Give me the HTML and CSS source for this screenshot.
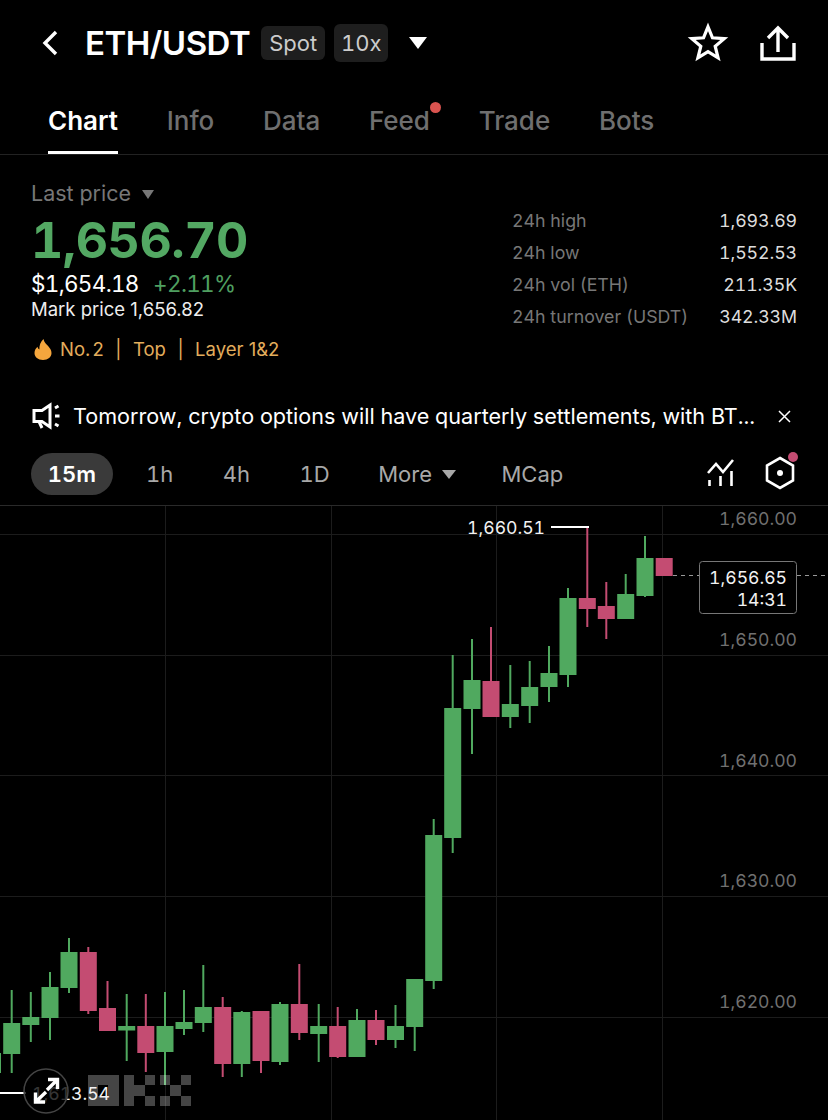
FILE: index.html
```html
<!DOCTYPE html>
<html lang="en">

<head>
    <meta charset="UTF-8">
    <meta name="viewport" content="width=device-width, initial-scale=1.0">
    <title>ETH/USDT</title>
    <link rel="stylesheet" href="styles.css">
</head>

<body>
    <div class="main">
        <div class="topbar">
            <svg class="back" width="16" height="26" viewBox="0 0 16 26">
                <path d="M14 2L3 13l11 11" />
            </svg>
            <span class="pair">ETH/USDT</span>
            <span class="chip">Spot</span>
            <span class="chip chip-lever">10x</span>
            <span class="caret caret-white"></span>
            <div class="topbar-icons">
                <svg class="line-icon" width="38" height="38" viewBox="0 0 40 40">
                    <polygon points="20,3 24.7,14.5 37.1,15.4 27.6,23.5 30.6,35.6 20,29 9.4,35.6 12.4,23.5 2.9,15.4 15.3,14.5" />
                </svg>
                <svg class="line-icon" width="36" height="36" viewBox="0 0 36 36">
                    <path d="M2 18v16h32V18M18 27V3M8 13L18 3l10 10" />
                </svg>
            </div>
        </div>

        <div class="tabs">
            <span class="tab active">Chart</span>
            <span class="tab">Info</span>
            <span class="tab">Data</span>
            <span class="tab tab-dot">Feed</span>
            <span class="tab">Trade</span>
            <span class="tab">Bots</span>
        </div>

        <div class="stats">
            <div class="price-col">
                <div class="last-label">Last price <span class="caret caret-grey"></span></div>
                <div class="last-price">1,656.70</div>
                <div class="sub-price">$1,654.18 <span class="change">+2.11%</span></div>
                <div class="mark-price">Mark price 1,656.82</div>
                <div class="tags">
                    <svg class="flame" width="18" height="21" viewBox="0 0 18 21">
                        <path d="M9.5 0c.6 3.5 2.6 4.7 4.6 7 1.900 2.200 3.400 4.300 3.400 7 0 3.900-3.500 7-8.500 7S.5 17.900.5 14c0-2.800 1.500-4.700 3-6.200.3 1.300.9 2.200 1.900 2.700C5.100 6.700 6.600 2.700 9.500 0z" />
                    </svg>
                    <span class="tag-no">No. 2</span>
                    <span class="tag-bar">|</span>
                    <span>Top</span>
                    <span class="tag-bar">|</span>
                    <span>Layer 1&amp;2</span>
                </div>
            </div>
            <div class="day-col">
                <div class="day-row"><span>24h high</span><b>1,693.69</b></div>
                <div class="day-row"><span>24h low</span><b>1,552.53</b></div>
                <div class="day-row"><span>24h vol (ETH)</span><b>211.35K</b></div>
                <div class="day-row"><span>24h turnover (USDT)</span><b>342.33M</b></div>
            </div>
        </div>

        <div class="notice">
            <svg class="line-icon horn" width="28" height="26" viewBox="0 0 28 26">
                <path d="M2 7.500h8L18 2v22l-8-5.500H2zM7 18.500L10 25M23 5l3.500-2M23 13h4.500M23 21l3.500 2" />
            </svg>
            <span class="notice-text">Tomorrow, crypto options will have quarterly settlements, with BT...</span>
            <svg class="line-icon close" width="13" height="13" viewBox="0 0 13 13">
                <path d="M1 1l11 11M12 1L1 12" />
            </svg>
        </div>

        <div class="frames">
            <span class="frame selected">15m</span>
            <span class="frame">1h</span>
            <span class="frame">4h</span>
            <span class="frame">1D</span>
            <span class="frame frame-more">More <span class="caret caret-light"></span></span>
            <span class="frame">MCap</span>
            <div class="frame-icons">
                <svg class="line-icon thin" width="30" height="30" viewBox="0 0 30 30">
                    <path d="M2 14l8-9 7 8L27 1M3.500 27v-6M14.500 27V17M25.500 27V12" />
                </svg>
                <svg class="line-icon thin" width="36" height="40" viewBox="0 0 36 40">
                    <path d="M16 4l13 7.500v15L16 34 3 26.500v-15z" />
                    <circle class="hex-dot" cx="16" cy="19" r="3" />
                    <circle class="red-dot" cx="29" cy="3" r="5" />
                </svg>
            </div>
        </div>

        <div class="chart">
            <svg class="chart-svg" width="828" height="614" viewBox="0 506 828 614">
                <path class="grid" d="M0 534.500H828M0 655.500H828M0 775.500H828M0 896.500H828M0 1017.500H828M165.500 506V1120M331.500 506V1120M496.500 506V1120M662.500 506V1120" />

                <g class="up"><path d="M-7.500 990V1090" /><rect x="-16" y="1053" width="17" height="20" /></g>
                <g class="up"><path d="M11.700 990V1073" /><rect x="3.200" y="1023" width="17" height="31" /></g>
                <g class="up"><path d="M30.800 992V1042" /><rect x="22.300" y="1017" width="17" height="8" /></g>
                <g class="up"><path d="M50 972V1040" /><rect x="41.500" y="987" width="17" height="31" /></g>
                <g class="up"><path d="M69 938V993" /><rect x="60.500" y="952" width="17" height="36" /></g>
                <g class="down"><path d="M88.300 947V1014" /><rect x="79.800" y="952" width="17" height="59" /></g>
                <g class="down"><path d="M107.500 981V1031" /><rect x="99" y="1008" width="17" height="23" /></g>
                <g class="up"><path d="M126.700 994V1061" /><rect x="118.200" y="1026" width="17" height="4.500" /></g>
                <g class="down"><path d="M145.800 994V1072" /><rect x="137.300" y="1026" width="17" height="27" /></g>
                <g class="up"><path d="M165 992V1085" /><rect x="156.500" y="1026" width="17" height="26" /></g>
                <g class="up"><path d="M184 990V1035" /><rect x="175.500" y="1022" width="17" height="7" /></g>
                <g class="up"><path d="M203.300 965V1032" /><rect x="194.800" y="1007" width="17" height="16" /></g>
                <g class="down"><path d="M222.700 997V1077" /><rect x="214.200" y="1007" width="17" height="57" /></g>
                <g class="up"><path d="M241.800 1011V1077" /><rect x="233.300" y="1012" width="17" height="52" /></g>
                <g class="down"><path d="M261 1011V1073" /><rect x="252.500" y="1011" width="17" height="50" /></g>
                <g class="up"><path d="M280 1002V1065" /><rect x="271.500" y="1004" width="17" height="58" /></g>
                <g class="down"><path d="M299.300 964V1040" /><rect x="290.800" y="1004" width="17" height="29" /></g>
                <g class="up"><path d="M318.700 1004V1062" /><rect x="310.200" y="1026" width="17" height="8" /></g>
                <g class="down"><path d="M337.700 1007V1058" /><rect x="329.200" y="1026" width="17" height="31" /></g>
                <g class="up"><path d="M357 1009V1057" /><rect x="348.500" y="1020" width="17" height="37" /></g>
                <g class="down"><path d="M376 1010V1045" /><rect x="367.500" y="1020" width="17" height="20" /></g>
                <g class="up"><path d="M395.500 1005V1048" /><rect x="387" y="1026" width="17" height="14" /></g>
                <g class="up"><path d="M414.700 979V1051" /><rect x="406.200" y="979" width="17" height="48" /></g>
                <g class="up"><path d="M433.700 819V989" /><rect x="425.200" y="835" width="17" height="146" /></g>
                <g class="up"><path d="M452.700 655V853" /><rect x="444.200" y="708" width="17" height="130" /></g>
                <g class="up"><path d="M472 639V754" /><rect x="463.500" y="680" width="17" height="29" /></g>
                <g class="down"><path d="M491 627V717" /><rect x="482.500" y="681" width="17" height="36" /></g>
                <g class="up"><path d="M510.300 665V728" /><rect x="501.800" y="704" width="17" height="13" /></g>
                <g class="up"><path d="M529.700 661V723" /><rect x="521.200" y="687" width="17" height="19" /></g>
                <g class="up"><path d="M549 646V702" /><rect x="540.500" y="673" width="17" height="14" /></g>
                <g class="up"><path d="M568 588V687" /><rect x="559.500" y="598" width="17" height="77" /></g>
                <g class="down"><path d="M587.300 527V627" /><rect x="578.800" y="598" width="17" height="11" /></g>
                <g class="down"><path d="M606.300 582V639" /><rect x="597.800" y="606" width="17" height="13" /></g>
                <g class="up"><path d="M625.700 574V619" /><rect x="617.200" y="594" width="17" height="25" /></g>
                <g class="up"><path d="M645 536V597" /><rect x="636.500" y="558" width="17" height="38" /></g>
                <g class="down"><rect x="655.700" y="558" width="17" height="18" /></g>

                <g class="axis">
                    <text x="797" y="525">1,660.00</text>
                    <text x="797" y="646">1,650.00</text>
                    <text x="797" y="767">1,640.00</text>
                    <text x="797" y="887">1,630.00</text>
                    <text x="797" y="1008">1,620.00</text>
                </g>

                <path class="marker-line" d="M551 527H589" />
                <text class="marker" x="545" y="534">1,660.51</text>

                <path class="dash" d="M673 575.500H699M797 575.500H828" />
                <rect class="price-box" x="699.500" y="561.500" width="97" height="52" rx="3" />
                <text class="box-text" x="787" y="584">1,656.65</text>
                <text class="box-text" x="787" y="606">14:31</text>

                <path class="logo" d="M88 1075h31v31H88zM98 1085v11h10v-11zM124 1075h10v31h-10zM134 1085h11v11h-11zM145 1075h10v10h-10zM145 1096h10v10h-10zM160 1075h10v10h-10zM181 1075h10v10h-10zM170 1085h11v11h-11zM160 1096h10v10h-10zM181 1096h10v10h-10z" />

                <path class="marker-line" d="M0 1093H26" />
                <text class="marker" x="110" y="1100">1,613.54</text>
                <circle class="expand-bg" cx="46" cy="1091" r="22" />
                <path class="expand" d="M57.500 1079.500L47 1090M48 1079.500h9.500v9.500M35.500 1102L46 1092M35.500 1092.500v9.500H45" />
            </svg>
        </div>
    </div>
</body>

</html>
```

FILE: styles.css
```css
* {
    box-sizing: border-box;
}

body {
    margin: 0;
    background-color: #000;
    color: #fff;
    font-family: "Inter", "Liberation Sans", sans-serif;
    font-variant-numeric: tabular-nums;
    overflow: hidden;
}

.main {
    width: 828px;
    height: 1120px;
    overflow: hidden;
}

.line-icon {
    fill: none;
    stroke: #fff;
    stroke-width: 3.4;
    display: block;
    overflow: visible;
}

.line-icon.thin {
    stroke-width: 2.6;
}

.line-icon.horn {
    stroke-width: 3;
}

.caret {
    display: inline-block;
    width: 0;
    height: 0;
    border-left: 9px solid transparent;
    border-right: 9px solid transparent;
    border-top: 12px solid #fff;
}

.caret-grey {
    border-left-width: 6.5px;
    border-right-width: 6.5px;
    border-top: 9px solid #777;
    margin-left: 5px;
    vertical-align: 2px;
}

.caret-light {
    border-left-width: 7px;
    border-right-width: 7px;
    border-top: 9px solid #a8a8a8;
    margin-left: 4px;
    vertical-align: 3px;
}

.topbar {
    height: 86px;
    display: flex;
    align-items: center;
    padding: 0 32px 0 42px;
}

.back {
    fill: none;
    stroke: #fff;
    stroke-width: 3.4;
}

.pair {
    margin-left: 27px;
    font-size: 33px;
    font-weight: 600;
    letter-spacing: -0.5px;
}

.chip {
    margin-left: 11px;
    width: 64px;
    height: 34px;
    line-height: 34px;
    text-align: center;
    border-radius: 6px;
    background-color: #1e1e1e;
    color: #ccc;
    font-size: 22px;
}

.chip-lever {
    margin-left: 9px;
    width: 54px;
    height: 38px;
    line-height: 38px;
}

.caret-white {
    margin-left: 21px;
}

.topbar-icons {
    margin-left: auto;
    display: flex;
    align-items: center;
    gap: 33px;
}

.tabs {
    height: 69px;
    display: flex;
    gap: 48.7px;
    padding: 0 48px;
    border-bottom: 1px solid #222;
}

.tab {
    position: relative;
    height: 68px;
    padding-top: 19px;
    line-height: 32px;
    font-size: 26px;
    font-weight: 500;
    color: #6f6f6f;
}

.tab.active {
    color: #fff;
    font-weight: 600;
    border-bottom: 3px solid #fff;
}

.tab-dot::after {
    content: "";
    position: absolute;
    right: -11px;
    top: 16px;
    width: 11px;
    height: 11px;
    border-radius: 50%;
    background-color: #d9534f;
}

.stats {
    display: flex;
    justify-content: space-between;
    padding: 0 31px;
}

.price-col {
    padding-top: 25px;
}

.last-label {
    line-height: 26px;
    font-size: 21.5px;
    color: #777;
}

.last-price {
    margin-top: 6px;
    line-height: 56px;
    font-size: 50px;
    font-weight: 700;
    letter-spacing: -0.5px;
    color: #53a863;
}

.sub-price {
    margin-top: 3px;
    line-height: 26px;
    font-size: 22.5px;
    letter-spacing: -0.7px;
}

.change {
    margin-left: 9px;
    color: #4f9f60;
}

.mark-price {
    line-height: 24px;
    font-size: 18.5px;
    font-variant-numeric: normal;
    color: #eee;
}

.tags {
    margin-top: 16px;
    height: 24px;
    display: flex;
    align-items: center;
    font-size: 18.5px;
    font-variant-numeric: normal;
    color: #e3ad5c;
}

.flame {
    margin-left: 3px;
    fill: #f5a63d;
}

.tag-no {
    margin-left: 8px;
    word-spacing: -3px;
}

.tag-bar {
    margin: 0 11.5px;
}

.day-col {
    width: 285px;
    padding-top: 50px;
}

.day-row {
    height: 32px;
    line-height: 32px;
    display: flex;
    justify-content: space-between;
    font-size: 17.8px;
    color: #777;
}

.day-row b {
    font-weight: 400;
    letter-spacing: -0.1px;
    color: #ddd;
}

.notice {
    margin-top: 35px;
    height: 40px;
    padding: 0 37px 0 32px;
    display: flex;
    align-items: center;
}

.notice-text {
    margin-left: 13px;
    font-size: 21.6px;
    white-space: nowrap;
}

.close {
    margin-left: auto;
    stroke-width: 1.5;
}

.frames {
    margin-top: 17px;
    height: 42px;
    padding: 0 28px 0 31px;
    display: flex;
    align-items: center;
    gap: 49.5px;
    font-size: 22px;
    color: #a8a8a8;
}

.frame.selected {
    width: 82px;
    height: 42px;
    line-height: 42px;
    margin-right: -16.5px;
    text-align: center;
    border-radius: 21px;
    background-color: #3a3a3a;
    color: #fff;
    font-weight: 600;
}

.frame-more {
    margin-left: -1px;
    margin-right: -4px;
}

.frame-icons {
    margin-left: auto;
    display: flex;
    align-items: center;
    gap: 28px;
}

.hex-dot {
    fill: #fff;
    stroke: none;
}

.red-dot {
    fill: #c44c72;
    stroke: none;
}

.chart {
    margin-top: 10px;
    border-top: 1px solid #2a2a2a;
}

.chart-svg {
    display: block;
}

.grid {
    fill: none;
    stroke: #1c1c1c;
    stroke-width: 1;
}

.up {
    fill: #50a95f;
    stroke: #50a95f;
}

.down {
    fill: #c44c72;
    stroke: #c44c72;
}

.up rect,
.down rect {
    stroke: none;
}

.up path,
.down path {
    stroke-width: 2;
}

.axis text {
    text-anchor: end;
    font-size: 17.6px;
    fill: #707070;
}

.marker,
.box-text {
    text-anchor: end;
    font-size: 17.6px;
    fill: #f2f2f2;
}

.marker-line {
    fill: none;
    stroke: #fff;
    stroke-width: 2;
}

.dash {
    fill: none;
    stroke: #999;
    stroke-width: 1;
    stroke-dasharray: 4 4;
}

.price-box {
    fill: #000;
    stroke: #777;
    stroke-width: 1;
}

.logo {
    fill: #fff;
    fill-rule: evenodd;
    opacity: .27;
}

.expand-bg {
    fill: rgba(0, 0, 0, .78);
    stroke: #444;
    stroke-width: 1.5;
}

.expand {
    fill: none;
    stroke: #fff;
    stroke-width: 3.4;
}
```
